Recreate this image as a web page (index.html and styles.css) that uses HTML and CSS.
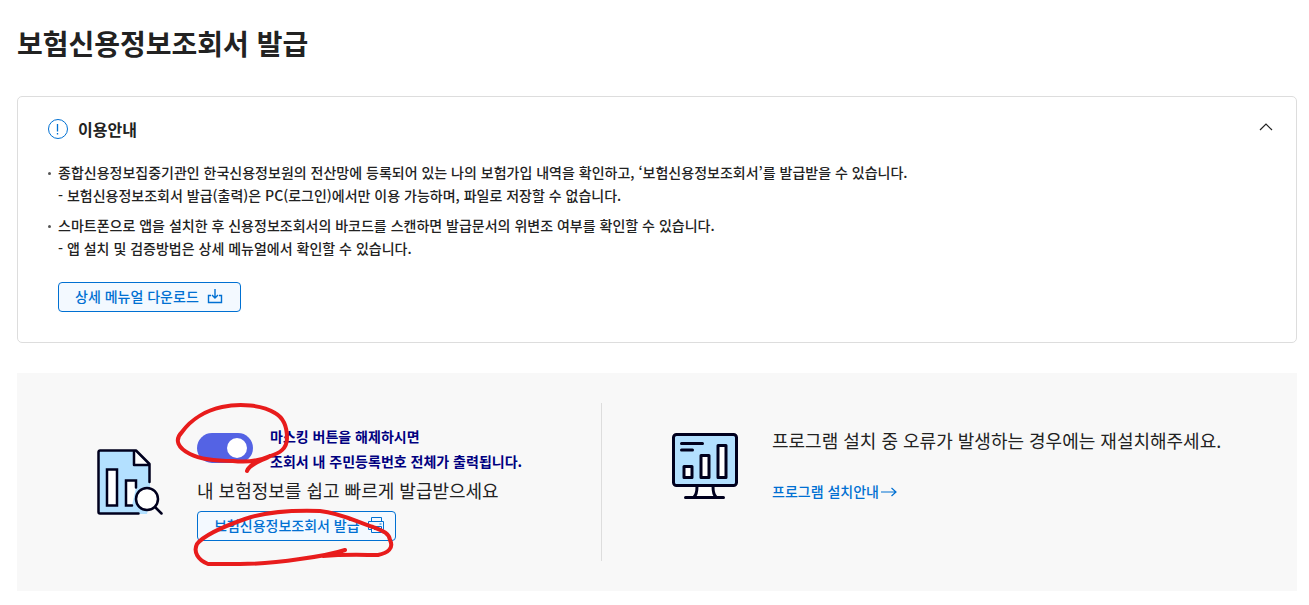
FILE: index.html
```html
<!DOCTYPE html>
<html lang="ko">
<head>
  <meta charset="UTF-8">
  <title>보험신용정보조회서 발급</title>
  <meta name="viewport" content="width=device-width, initial-scale=1.0">
  <link rel="stylesheet" href="styles.css">
</head>
<body>
  <main class="page">
    <h1 class="page-title">보험신용정보조회서 발급</h1>

    <section class="notice">
      <div class="notice-head">
        <svg class="notice-icon" viewBox="0 0 20 20" width="20" height="20" aria-hidden="true">
          <circle cx="10" cy="10" r="9.5" fill="none" stroke="#0070d2"/>
          <path d="M9.500 5v7.500M9.500 14v1.500" fill="none" stroke="#0070d2" stroke-width="1.300"/>
        </svg>
        <h2>이용안내</h2>
        <button type="button" class="fold" aria-label="접기">
          <svg viewBox="0 0 14 8" width="14" height="8" aria-hidden="true"><path d="M1 7l6-6 6 6" fill="none" stroke="#222" stroke-width="1.200"/></svg>
        </button>
      </div>

      <ul class="notice-list">
        <li>종합신용정보집중기관인 한국신용정보원의 전산망에 등록되어 있는 나의 보험가입 내역을 확인하고, ‘보험신용정보조회서’를 발급받을 수 있습니다.
          <p>- 보험신용정보조회서 발급(출력)은 PC(로그인)에서만 이용 가능하며, 파일로 저장할 수 없습니다.</p>
        </li>
        <li>스마트폰으로 앱을 설치한 후 신용정보조회서의 바코드를 스캔하면 발급문서의 위변조 여부를 확인할 수 있습니다.
          <p>- 앱 설치 및 검증방법은 상세 메뉴얼에서 확인할 수 있습니다.</p>
        </li>
      </ul>

      <button type="button" class="btn btn-manual">상세 메뉴얼 다운로드
        <svg viewBox="0 0 18 18" width="18" height="18" aria-hidden="true">
          <path d="M5 8.500H2.500v7h13v-7H13M9 2v9M6 8l3 3 3-3" fill="none" stroke="#0070d2" stroke-width="1.400"/>
        </svg>
      </button>
    </section>

    <section class="panel">
      <div class="cell cell-issue">
        <svg class="cell-icon" viewBox="0 0 66 66" width="66" height="66" aria-hidden="true">
          <path d="M2 1h37l14 14v36L50 65H1V2z" fill="#b3e0ff"/>
          <path d="M37 1v15h15z" fill="#fff"/>
          <g stroke="#00001e" stroke-width="2.500" stroke-linejoin="round" stroke-linecap="round">
            <path d="M41.500 64.500H3a1.500 1.500 0 0 1-1.500-1.500V3A1.500 1.500 0 0 1 3 1.500h36L52.500 15v18M37 2v14h15" fill="none"/>
            <path d="M10 20.500h10v36H10z" fill="#fff" stroke-linejoin="miter"/>
            <path d="M35 56.500h-6v-25h10v7" fill="#fff" stroke-linejoin="miter"/>
            <circle cx="50" cy="50" r="11" fill="#fff"/>
            <path d="M58.500 58.500l6 6"/>
          </g>
        </svg>
        <div class="cell-body">
          <div class="masking">
            <input type="checkbox" role="switch" id="masking" class="switch" checked>
            <label for="masking">마스킹 버튼을 해제하시면<br>조회서 내 주민등록번호 전체가 출력됩니다.</label>
          </div>
          <p class="lead">내 보험정보를 쉽고 빠르게 발급받으세요</p>
          <button type="button" class="btn">보험신용정보조회서 발급
            <svg viewBox="0 0 18 18" width="18" height="18" aria-hidden="true">
              <path d="M4.500 5.500v-4h10v4M4.500 13.500h-3v-8h15v8h-2M4.500 10.500h10v6h-10zM12.500 8h2M7 13.500h5" fill="none" stroke="#0070d2"/>
            </svg>
          </button>
        </div>
        <!-- pen marks over the switch and the issue button -->
        <svg class="pen" viewBox="172 400 230 170" width="230" height="170" aria-hidden="true">
          <g fill="none" stroke="#e81c1c" stroke-width="4" stroke-linecap="round" stroke-linejoin="round">
            <path d="M247 471C250 463 264 460 270 456M270 456C257 462 242 462 233 461C215 461 200 459 190 454C178 448 174 440 182 432C192 418 208 410 222 407C240 403 262 405 275 413C284 418 287 428 287 438C287 449 280 453 268 457"/>
            <path d="M345 550C330 555 315 557 300 559C280 562 262 564 240 564L208 564C198 560 193 552 197 544C205 534 225 526 245 519C265 512 290 510 320 511C340 513 355 521 373 527C383 531 389 533 390 540C394 548 388 553 378 555C365 555 345 554 323 556"/>
          </g>
        </svg>
      </div>

      <div class="cell cell-install">
        <svg class="cell-icon" viewBox="0 0 66 66" width="66" height="66" aria-hidden="true">
          <g stroke="#00001e" stroke-width="3" stroke-linejoin="round" stroke-linecap="round">
            <path d="M25 53h16l3 11H22z" fill="#fff" stroke="none"/>
            <rect x="1.500" y="1.500" width="63" height="51" rx="3" fill="#b3e0ff"/>
            <path d="M25 53c0 5-.5 9-3 11M41 53c0 5 .5 9 3 11M13.500 64.500h38M9.500 10.500h21M9.500 17h11" fill="none"/>
            <path d="M12 33.500h8v11h-8zM29 22.500h8v22h-8zM46 12.500h8v32h-8z" fill="#fff"/>
          </g>
        </svg>
        <div class="cell-body">
          <p class="lead">프로그램 설치 중 오류가 발생하는 경우에는 재설치해주세요.</p>
          <a href="#" class="guide">프로그램 설치안내
            <svg viewBox="0 0 16 10" width="16" height="10" aria-hidden="true"><path d="M0 5h15M10.500 1L15 5l-4.500 4" fill="none" stroke="#0070d2" stroke-width="1.200"/></svg>
          </a>
        </div>
      </div>
    </section>
  </main>
</body>
</html>
```
FILE: styles.css
```css
:root {
  --blue: #0070d2;
  --text: #222;
  --line: #ddd;
}

* {
  margin: 0;
  padding: 0;
  box-sizing: border-box;
}

body {
  font-family: 'Noto Sans CJK KR', sans-serif;
  font-size: 14px;
  line-height: 23px;
  color: var(--text);
  background: #fff;
}

.page {
  padding: 23px 12px 14px 17px;
}

.page-title {
  font-size: 28px;
  line-height: 40px;
  font-weight: 700;
}

.notice {
  margin-top: 33px;
  padding: 20px 23px 30px 30px;
  border: 1px solid var(--line);
  border-radius: 5px;
}

.notice-head {
  display: flex;
  align-items: center;
  gap: 10px;
  height: 24px;
}

.notice-head h2 {
  font-size: 16px;
  line-height: 24px;
  font-weight: 700;
}

.fold {
  display: flex;
  margin-left: auto;
  padding-bottom: 4px;
  border: 0;
  background: none;
  cursor: pointer;
}

.notice-list {
  margin-top: 20px;
  list-style: none;
  font-weight: 500;
}

.notice-list li {
  position: relative;
  padding-left: 10px;
}

.notice-list li + li {
  margin-top: 7px;
}

.notice-list li::before {
  content: '';
  position: absolute;
  left: 0;
  top: 11px;
  width: 3px;
  height: 3px;
  border-radius: 50%;
  background: #555;
}

.btn {
  display: inline-flex;
  align-items: center;
  gap: 7px;
  height: 30px;
  padding: 0 10px 2px 16px;
  border: 1px solid var(--blue);
  border-radius: 4px;
  background: #f3f9ff;
  color: var(--blue);
  font-family: inherit;
  font-size: 14px;
  font-weight: 500;
  cursor: pointer;
}

.btn-manual {
  display: flex;
  margin: 22px 0 0 10px;
  padding-right: 16px;
}

.panel {
  display: grid;
  grid-template-columns: 585fr 695fr;
  margin-top: 30px;
  padding: 30px 0;
  background: #f8f8f8;
}

.cell {
  display: flex;
  align-items: center;
  gap: 34px;
  min-height: 158px;
}

.cell-icon {
  flex: none;
}

.cell-issue {
  position: relative;
  padding-left: 80px;
  border-right: 1px solid var(--line);
}

.cell-install {
  align-self: start;
  min-height: 0;
  padding: 25px 0 0 70px;
}

.masking {
  display: flex;
  align-items: center;
  gap: 17px;
  color: navy;
  font-weight: 700;
  line-height: 25px;
}

.switch {
  appearance: none;
  display: flex;
  flex: none;
  justify-content: flex-end;
  align-items: center;
  width: 56px;
  height: 30px;
  margin-bottom: 2px;
  padding: 0 6px;
  border-radius: 15px;
  background: #5463e4;
  cursor: pointer;
}

.switch::before {
  content: '';
  width: 20px;
  height: 20px;
  border-radius: 50%;
  background: #fff;
}

.switch:not(:checked) {
  justify-content: flex-start;
  background: #bbb;
}

.lead {
  font-size: 18px;
  line-height: 25px;
}

.cell-issue .lead {
  margin: 4px 0 8px;
}

.guide {
  display: inline-flex;
  align-items: center;
  gap: 2px;
  margin-top: 27px;
  color: var(--blue);
  font-weight: 500;
  text-decoration: none;
}

.pen {
  position: absolute;
  left: 155px;
  top: -3px;
  pointer-events: none;
}
```
